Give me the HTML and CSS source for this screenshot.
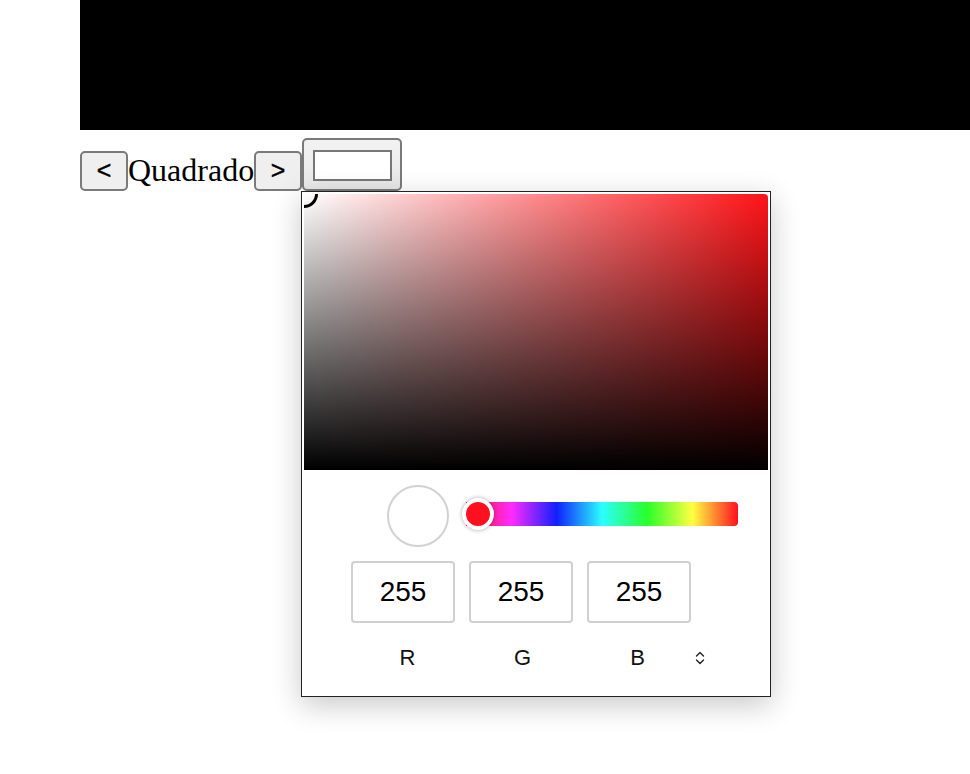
FILE: index.html
```html
<!DOCTYPE html>
<html>
<head>
<meta charset="utf-8">
<link rel="stylesheet" href="styles.css">
</head>
<body>
<div class="page">
  <div class="canvas"></div>
  <div class="toolbar">
    <button class="btn">&lt;</button>
    <span class="label">Quadrado</span>
    <button class="btn">&gt;</button>
    <div class="color-input"><div class="color-swatch"></div></div>
  </div>
</div>

<div class="picker">
  <div class="sv-area">
    <div class="sv-cursor"></div>
  </div>
  <div class="hue-row">
    <div class="preview"></div>
    <div class="hue-slider"><div class="hue-thumb"></div></div>
  </div>
  <div class="values">
    <div class="val">255</div>
    <div class="val">255</div>
    <div class="val">255</div>
  </div>
  <div class="channels">
    <div class="ch">R</div>
    <div class="ch">G</div>
    <div class="ch">B</div>
    <svg class="toggle" width="10" height="16" viewBox="0 0 10 16">
      <path d="M1.5 6 L5 2.5 L8.5 6" fill="none" stroke="#222" stroke-width="1.4" stroke-linecap="round" stroke-linejoin="round"/>
      <path d="M1.5 10 L5 13.5 L8.5 10" fill="none" stroke="#222" stroke-width="1.4" stroke-linecap="round" stroke-linejoin="round"/>
    </svg>
  </div>
</div>
</body>
</html>
```
FILE: styles.css
```css
html, body {
  margin: 0;
  padding: 0;
  background: #fff;
}
.page {
  padding-left: 80px;
}
.canvas {
  height: 130px;
  background: #000;
}
.toolbar {
  display: flex;
  align-items: flex-end;
  margin-top: 8px;
}
.btn {
  box-sizing: border-box;
  width: 48px;
  height: 40px;
  margin: 0;
  padding: 0 0 2px;
  border: 2px solid #7a7a7a;
  border-radius: 5px;
  background: #efefef;
  font-family: "Liberation Sans", Arial, sans-serif;
  font-size: 25px;
  font-weight: normal;
  color: #000;
  line-height: 1;
  -webkit-text-stroke: 0.4px #000;
}
.label {
  font-family: "Liberation Serif", "Times New Roman", serif;
  font-size: 32px;
  line-height: 32px;
  margin-bottom: 5px;
  color: #000;
}
.color-input {
  box-sizing: border-box;
  width: 100px;
  height: 53px;
  border: 2px solid #7a7a7a;
  border-radius: 5px;
  background: linear-gradient(#f2f2f2, #e8e8e8);
  padding: 10px 8px 10px 9px;
}
.color-swatch {
  box-sizing: border-box;
  height: 31px;
  border: 2px solid #777;
  background: #fff;
}

.picker {
  position: absolute;
  left: 301px;
  top: 191px;
  box-sizing: border-box;
  width: 470px;
  height: 506px;
  border: 1px solid #222;
  padding: 2px;
  background: #fff;
  box-shadow: 0 8px 28px rgba(0, 0, 0, 0.22);
  font-family: "Liberation Sans", Arial, sans-serif;
}
.sv-area {
  position: relative;
  height: 276px;
  overflow: hidden;
  border-top-right-radius: 4px;
  background:
    linear-gradient(to top, #000, rgba(0, 0, 0, 0)),
    linear-gradient(to right, #fff, #ff1418);
}
.sv-cursor {
  position: absolute;
  left: -14px;
  top: -14px;
  width: 28px;
  height: 28px;
  box-sizing: border-box;
  border: 3px solid #000;
  border-radius: 50%;
}
.hue-row {
  display: flex;
  align-items: flex-start;
  margin-top: 15px;
  padding-left: 83px;
}
.preview {
  box-sizing: border-box;
  width: 62px;
  height: 62px;
  border: 2px solid #d2d2d2;
  border-radius: 50%;
  background: #fff;
}
.hue-slider {
  position: relative;
  width: 272px;
  height: 24px;
  margin-left: 17px;
  margin-top: 17px;
  border-radius: 0 4px 4px 0;
  background: linear-gradient(to right,
    #ff1020 0%, #ff2bff 16.7%, #1020ff 33.3%, #2affff 50%, #2aff2a 66.7%, #ffff40 83.3%, #ff1020 100%);
}
.hue-thumb {
  position: absolute;
  left: -4px;
  top: -4px;
  box-sizing: border-box;
  width: 32px;
  height: 32px;
  border: 4px solid #fff;
  border-radius: 50%;
  background: #ff1020;
  box-shadow: 0 0 4px rgba(0, 0, 0, 0.35);
}
.values {
  display: flex;
  gap: 14px;
  margin-top: 14px;
  padding-left: 47px;
}
.val {
  box-sizing: border-box;
  width: 104px;
  height: 62px;
  border: 2px solid #d0d0d0;
  border-radius: 4px;
  display: flex;
  align-items: center;
  justify-content: center;
  font-size: 28px;
  color: #000;
}
.channels {
  display: flex;
  align-items: center;
  margin-top: 24px;
  padding-left: 46px;
}
.ch {
  width: 115px;
  text-align: center;
  font-size: 22px;
  line-height: 22px;
  color: #111;
}
.toggle {
  display: block;
}
```
